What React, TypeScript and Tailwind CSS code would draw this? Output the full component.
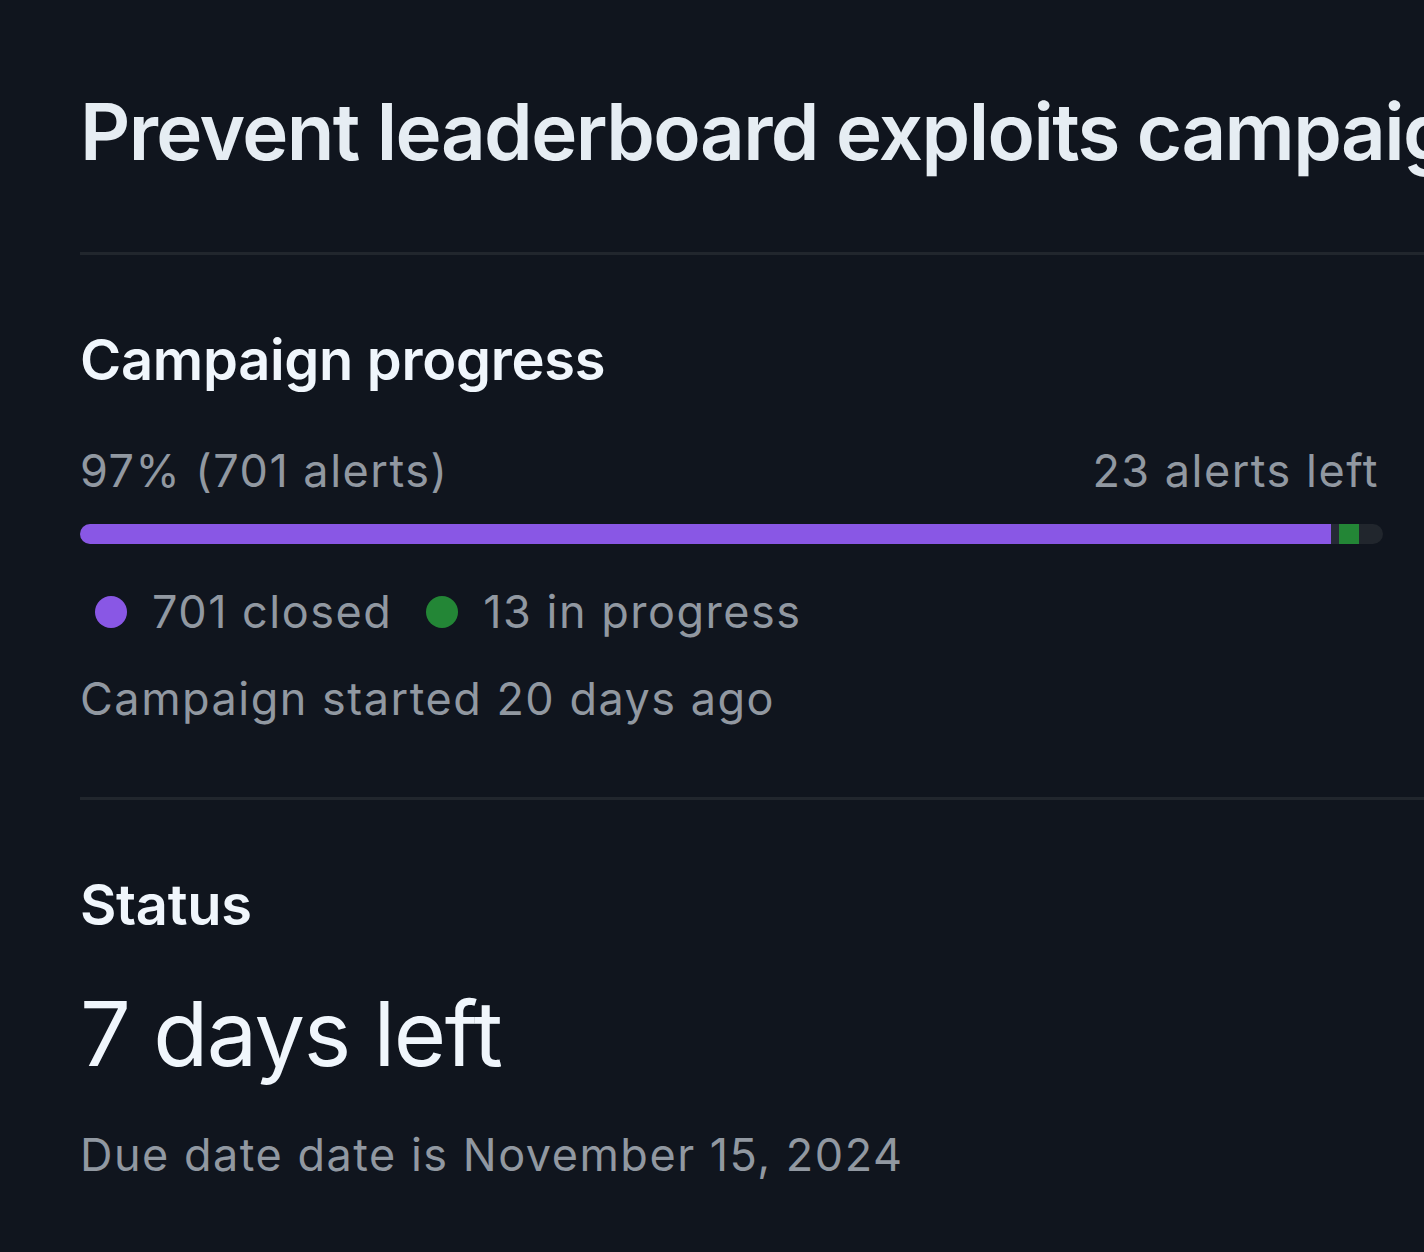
import React from 'react';

const Dot: React.FC<{ color: string }> = ({ color }) => (
  <span className={`inline-block w-[32px] h-[32px] rounded-full ${color}`} />
);

export default function App() {
  return (
    <div
      className="w-[1424px] h-[1252px] overflow-hidden bg-[#10151e] text-[#f0f6fc]"
      style={{ fontFamily: 'Inter, "Noto Sans", sans-serif' }}
    >
      <div className="pl-[80px] pt-[82px]">
        {/* Title */}
        <h1 className="text-[78px] leading-[100px] font-semibold whitespace-nowrap text-[#e6edf3] tracking-[-1.6px]">
          Prevent leaderboard exploits campaign
        </h1>

        <div className="mt-[70px] h-[3px] bg-[#21262d]" />

        {/* Campaign progress */}
        <div className="pr-[41px]">
          <h2 className="mt-[70px] text-[56px] leading-[70px] font-semibold tracking-[-0.3px]">Campaign progress</h2>

          <div className="mt-[48px] flex justify-between text-[45px] leading-[56px] tracking-[1.5px] text-[#9198a1]">
            <span>97% (701 alerts)</span>
            <span className="mr-[4px]">23 alerts left</span>
          </div>

          <div className="mt-[25px] flex h-[20px] rounded-full overflow-hidden bg-[#21262d]">
            <div className="w-[1251px] bg-[#8957e5]" />
            <div className="w-[8px] bg-[#262a36]" />
            <div className="w-[20px] bg-[#238636]" />
          </div>

          <div className="mt-[40px] flex items-center text-[45px] leading-[56px] tracking-[1.5px] text-[#9198a1]">
            <span className="ml-[15px] mr-[25px] flex">
              <Dot color="bg-[#8957e5]" />
            </span>
            <span>701 closed</span>
            <span className="ml-[34px] mr-[25px] flex">
              <Dot color="bg-[#238636]" />
            </span>
            <span>13 in progress</span>
          </div>

          <p className="mt-[31px] text-[45px] leading-[56px] tracking-[1.5px] text-[#9198a1]">
            Campaign started 20 days ago
          </p>
        </div>

        <div className="mt-[70px] h-[3px] bg-[#21262d]" />

        {/* Status */}
        <h2 className="mt-[70px] text-[56px] leading-[70px] font-semibold tracking-[-0.3px]">Status</h2>
        <p className="mt-[39px] text-[90px] leading-[110px] tracking-[-1.5px]">7 days left</p>
        <p className="mt-[38px] text-[45px] leading-[56px] tracking-[1.5px] text-[#9198a1]">
          Due date date is November 15, 2024
        </p>
      </div>
    </div>
  );
}
